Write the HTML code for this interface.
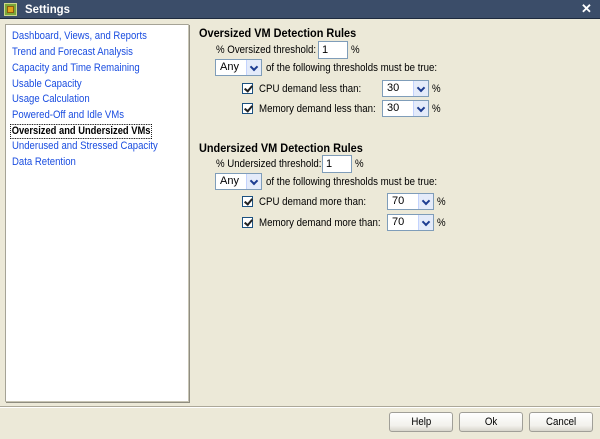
<!DOCTYPE html>
<html><head><style>
*{margin:0;padding:0;box-sizing:border-box}
body{width:600px;height:439px;background:#ece9d8;font-family:"Liberation Sans",sans-serif;font-size:11px;color:#000;position:relative;overflow:hidden}
.a{position:absolute;white-space:nowrap;line-height:13px;transform:scaleX(0.88);transform-origin:0 0}
#tb{position:absolute;left:0;top:0;width:600px;height:19px;background:#3b4d69;border-bottom:1px solid #1d2a3e}
#left{position:absolute;left:5px;top:24px;width:184px;height:378px;background:#fff;border:1px solid #a5a396;border-right-color:#c8c5b5;border-bottom-color:#c8c5b5;box-shadow:1px 1px 0 #8f8d80}
#left div{position:absolute;left:6px;color:#1a4de0;white-space:nowrap;line-height:13px;transform:scaleX(0.87);transform-origin:0 0}
.h{font-weight:bold;font-size:12px;transform:scaleX(0.91)!important}
.in{position:absolute;background:#fff;border:1px solid #7f9db9;height:18px;padding-left:3px;line-height:16px}
.sel{position:absolute;background:#fff;border:1px solid #7f9db9;height:17px;padding-left:4px;line-height:15px}
.sel i{position:absolute;right:0;top:0;width:15px;height:15px;background:#e4ebfa;border-left:1px solid #c3d3fd}
.sel i:after{content:"";position:absolute;left:4px;top:4px;width:4px;height:4px;border-right:2px solid #1c3c91;border-bottom:2px solid #1c3c91;transform:rotate(45deg)}
.cb{position:absolute;width:11px;height:11px;border:1px solid #1c5180;background:#fff}
.cb:after{content:"";position:absolute;left:3px;top:0px;width:3px;height:6px;border-right:2px solid #222;border-bottom:2px solid #222;transform:rotate(40deg)}
.btn{position:absolute;top:412px;width:64px;height:20px;border:1px solid #a09f98;border-radius:3px;background:linear-gradient(#fff,#f2f1ec 70%,#d8d6cc);text-align:center;line-height:18px}
.btn span{display:inline-block;transform:scaleX(0.88)}
</style></head><body>
<div id="tb">
<div style="position:absolute;left:4px;top:3px;width:13px;height:13px;background:#7aa63a;border:1px solid #cdd88a"><div style="position:absolute;left:2px;top:2px;width:7px;height:7px;background:#e3a21a;border:1px solid #8a5a10"></div></div>
<div class="a" style="left:25px;top:3px;color:#fff;font-weight:bold;font-size:12px;transform:scaleX(0.95)">Settings</div>
<div class="a" style="left:581px;top:2px;color:#fff;font-weight:bold;font-size:13px;transform:none">✕</div>
</div>
<div id="left">
<div style="top:5px">Dashboard, Views, and Reports</div>
<div style="top:21px">Trend and Forecast Analysis</div>
<div style="top:37px">Capacity and Time Remaining</div>
<div style="top:53px">Usable Capacity</div>
<div style="top:68px">Usage Calculation</div>
<div style="top:84px">Powered-Off and Idle VMs</div>
<div style="top:99px;left:4px;color:#000;font-weight:bold;border:1px dotted #000;padding:0 1px;transform:scaleX(0.85)">Oversized and Undersized VMs</div>
<div style="top:115px">Underused and Stressed Capacity</div>
<div style="top:131px">Data Retention</div>
</div>

<div class="a h" style="left:199px;top:27px">Oversized VM Detection Rules</div>
<div class="a" style="left:216px;top:44px">% Oversized threshold:</div>
<div class="in" style="left:318px;top:41px;width:30px">1</div>
<div class="a" style="left:351px;top:44px">%</div>
<div class="sel" style="left:215px;top:59px;width:47px">Any<i></i></div>
<div class="a" style="left:266px;top:62px">of the following thresholds must be true:</div>
<div class="cb" style="left:242px;top:83px"></div>
<div class="a" style="left:259px;top:83px">CPU demand less than:</div>
<div class="sel" style="left:382px;top:80px;width:47px">30<i></i></div>
<div class="a" style="left:432px;top:83px">%</div>
<div class="cb" style="left:242px;top:103px"></div>
<div class="a" style="left:259px;top:103px">Memory demand less than:</div>
<div class="sel" style="left:382px;top:100px;width:47px">30<i></i></div>
<div class="a" style="left:432px;top:103px">%</div>

<div class="a h" style="left:199px;top:142px">Undersized VM Detection Rules</div>
<div class="a" style="left:216px;top:158px">% Undersized threshold:</div>
<div class="in" style="left:322px;top:155px;width:30px">1</div>
<div class="a" style="left:355px;top:158px">%</div>
<div class="sel" style="left:215px;top:173px;width:47px">Any<i></i></div>
<div class="a" style="left:266px;top:176px">of the following thresholds must be true:</div>
<div class="cb" style="left:242px;top:196px"></div>
<div class="a" style="left:259px;top:196px">CPU demand more than:</div>
<div class="sel" style="left:387px;top:193px;width:47px">70<i></i></div>
<div class="a" style="left:437px;top:196px">%</div>
<div class="cb" style="left:242px;top:217px"></div>
<div class="a" style="left:259px;top:217px">Memory demand more than:</div>
<div class="sel" style="left:387px;top:214px;width:47px">70<i></i></div>
<div class="a" style="left:437px;top:217px">%</div>

<div style="position:absolute;left:0;top:406px;width:600px;height:2px;border-top:1px solid #aca899;border-bottom:1px solid #fff"></div>
<div class="btn" style="left:389px"><span>Help</span></div>
<div class="btn" style="left:459px"><span>Ok</span></div>
<div class="btn" style="left:529px"><span>Cancel</span></div>
</body></html>
